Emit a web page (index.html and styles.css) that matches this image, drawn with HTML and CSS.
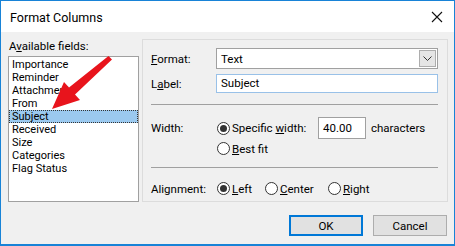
FILE: index.html
```html
<!DOCTYPE html>
<html lang="en">
<head>
    <meta charset="UTF-8">
    <title>Format Columns</title>
    <link rel="stylesheet" href="styles.css">
</head>
<body>

    <div class="window">
        <!-- title bar -->
        <div class="titlebar">
            <span class="title">Format Columns</span>
            <svg class="close" width="12" height="12" viewBox="0 0 12 12">
                <path d="M1 1 L11 11 M11 1 L1 11" stroke="#111" stroke-width="1.1" fill="none"/>
            </svg>
        </div>

        <div class="content">
            <div class="columns">
                <!-- left: field list -->
                <div class="fields">
                    <div class="fields-label">A<u>v</u>ailable fields:</div>
                    <ul class="listbox">
                        <li>Importance</li>
                        <li>Reminder</li>
                        <li>Attachment</li>
                        <li>From</li>
                        <li class="selected">Subject</li>
                        <li>Received</li>
                        <li>Size</li>
                        <li>Categories</li>
                        <li>Flag Status</li>
                    </ul>
                </div>

                <!-- right: options -->
                <div class="group">
                    <div class="row first">
                        <span class="lbl"><u>F</u>ormat:</span>
                        <div class="select">
                            <span>Text</span>
                            <span class="drop">
                                <svg width="9" height="6" viewBox="0 0 9 6"><path d="M0.5 0.5 L4.5 4.5 L8.5 0.5" stroke="#333" fill="none"/></svg>
                            </span>
                        </div>
                    </div>
                    <div class="row second">
                        <span class="lbl">L<u>a</u>bel:</span>
                        <div class="textbox focus">Subject</div>
                    </div>

                    <div class="sep sep1"></div>

                    <div class="row width-row">
                        <span class="lbl">Width:</span>
                        <span class="radio checked"></span>
                        <span class="opt opt-specific">Specific <u>w</u>idth:</span>
                        <div class="textbox small">40.00</div>
                        <span class="unit">characters</span>
                    </div>
                    <div class="row best-row">
                        <span class="lbl"></span>
                        <span class="radio"></span>
                        <span class="opt"><u>B</u>est fit</span>
                    </div>

                    <div class="sep sep2"></div>

                    <div class="row align-row">
                        <span class="lbl">Alignment:</span>
                        <span class="radio checked"></span>
                        <span class="opt opt-left"><u>L</u>eft</span>
                        <span class="radio"></span>
                        <span class="opt opt-center"><u>C</u>enter</span>
                        <span class="radio"></span>
                        <span class="opt"><u>R</u>ight</span>
                    </div>
                </div>
            </div>

            <div class="buttons">
                <button class="btn default">OK</button>
                <button class="btn">Cancel</button>
            </div>
        </div>

        <!-- red annotation arrow -->
        <svg class="arrow" width="455" height="246" viewBox="0 0 455 246">
            <polygon points="52,109 64,82 69,87.5 108.5,56 112,59.5 75,94.5 80,100" fill="#e8141c"/>
        </svg>
    </div>

</body>
</html>
```

FILE: styles.css
```css
/* page */
body {
    margin: 0;
    font-family: Roboto, 'Noto Sans', sans-serif;
    font-size: 11.5px;
    color: #000;
}

u {
    text-decoration: underline;
    text-underline-offset: 1px;
}

/* dialog window */
.window {
    position: relative;
    width: 455px;
    height: 246px;
    box-sizing: border-box;
    border: 1px solid #1883d7;
    border-bottom-width: 2px;
    background-color: #f0f0f0;
    display: flex;
    flex-direction: column;
}

.titlebar {
    height: 31px;
    background-color: #fff;
    display: flex;
    align-items: center;
    justify-content: space-between;
    padding: 0 10px 0 9px;
    flex-shrink: 0;
}

.title {
    font-size: 12.5px;
    margin-top: 2px;
}

.close {
    margin-right: 1px;
}

.content {
    padding: 7px 6px 0 7px;
    flex: 1;
}

.columns {
    display: flex;
    gap: 3px;
}

/* field list */
.fields {
    width: 131px;
}

.fields-label {
    height: 17px;
    line-height: 14px;
    padding-left: 1px;
}

.listbox {
    list-style: none;
    margin: 0;
    padding: 1px 0 0 0;
    height: 146px;
    box-sizing: border-box;
    border: 1px solid #a0a0a0;
    background-color: #fff;
    font-size: 11px;
}

.listbox li {
    height: 13px;
    line-height: 13px;
    padding-left: 3px;
}

.listbox li.selected {
    background-color: #9bc9ef;
    outline: 1px dotted #333;
    outline-offset: -1px;
}

/* options group */
.group {
    width: 306px;
    height: 163px;
    box-sizing: border-box;
    border: 1px solid #dcdcdc;
    padding: 0 9px 0 8px;
}

.row {
    display: flex;
    align-items: center;
    height: 15px;
}

.row.first {
    margin-top: 8px;
    height: 21px;
}

.row.second {
    margin-top: 5px;
    height: 19px;
}

.lbl {
    width: 65px;
    flex-shrink: 0;
}

.select {
    width: 222px;
    height: 21px;
    box-sizing: border-box;
    border: 1px solid #a0a0a0;
    background-color: #fff;
    display: flex;
    align-items: center;
    justify-content: space-between;
    padding: 0 1px 0 4px;
}

.drop {
    width: 17px;
    height: 17px;
    box-sizing: border-box;
    border: 1px solid #adadad;
    background-color: #e5e5e5;
    display: flex;
    align-items: center;
    justify-content: center;
}

.textbox {
    height: 19px;
    width: 222px;
    box-sizing: border-box;
    border: 1px solid #7a7a7a;
    background-color: #fff;
    padding-left: 4px;
    line-height: 17px;
}

.textbox.focus {
    border-color: #99c1e8;
}

.textbox.small {
    width: 48px;
    height: 22px;
    line-height: 20px;
    border-color: #a0a0a0;
}

.sep {
    width: 287px;
    height: 1px;
    background-color: #a0a0a0;
}

.sep1 {
    margin-top: 11px;
}

.sep2 {
    margin-top: 11px;
}

.width-row {
    margin-top: 12px;
    height: 22px;
}

.best-row {
    margin-top: 2px;
}

.align-row {
    margin-top: 13px;
}

.radio {
    width: 13px;
    height: 13px;
    box-sizing: border-box;
    border: 1px solid #333;
    border-radius: 50%;
    background-color: #fff;
    margin-left: 1px;
    flex-shrink: 0;
    display: flex;
    align-items: center;
    justify-content: center;
}

.radio.checked::after {
    content: "";
    width: 7px;
    height: 7px;
    border-radius: 50%;
    background-color: #333;
}

.opt {
    margin-left: 2px;
}

.opt-specific {
    width: 86px;
    flex-shrink: 0;
}

.opt-left {
    width: 32px;
}

.opt-center {
    width: 47px;
}

.unit {
    margin-left: 5px;
}

/* bottom buttons */
.buttons {
    display: flex;
    justify-content: flex-end;
    gap: 10px;
    margin-top: 13px;
    padding-right: 1px;
}

.btn {
    width: 74px;
    height: 21px;
    box-sizing: border-box;
    border: 1px solid #adadad;
    background-color: #e1e1e1;
    font-family: inherit;
    font-size: 11.5px;
    padding: 0;
}

.btn.default {
    border: 2px solid #0078d7;
}

/* annotation */
.arrow {
    position: absolute;
    left: -1px;
    top: -1px;
    pointer-events: none;
}
```
